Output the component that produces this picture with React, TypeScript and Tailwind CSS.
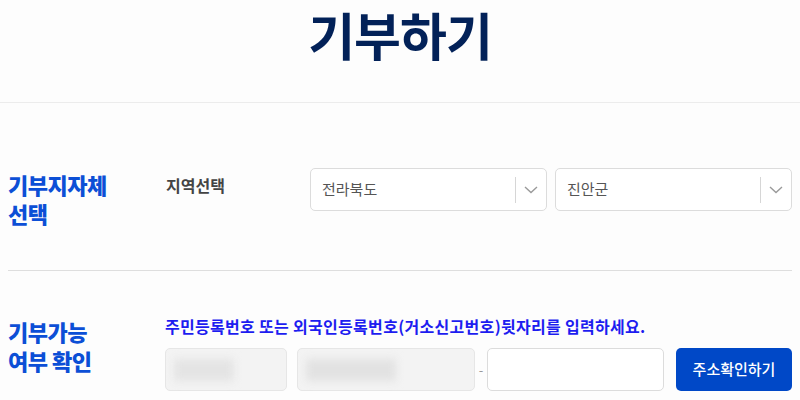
import React from "react";

function Chevron() {
  return (
    <svg width="14" height="8" viewBox="0 0 14 8" fill="none">
      <path d="M1 1l6 5.5L13 1" stroke="#9a9a9a" strokeWidth="1.4" />
    </svg>
  );
}

function Select({ value }: { value: string }) {
  return (
    <div className="flex-1 h-[43px] border border-[#dcdcdc] rounded-[5px] bg-white flex items-center">
      <div className="flex-1 pl-[11px] text-[15px] text-[#555]">{value}</div>
      <div className="w-px h-[26px] bg-[#d6d6d6]" />
      <div className="w-[30px] flex items-center justify-center">
        <Chevron />
      </div>
    </div>
  );
}

export default function App() {
  return (
    <div
      className="w-[800px] h-[400px] bg-[#fdfdfd] overflow-hidden"
      style={{ fontFamily: '"Noto Sans CJK KR", "Noto Sans", sans-serif' }}
    >
      <div className="h-[103px] border-b border-[#ececec] flex justify-center items-start">
        <h1 className="-mt-[3px] text-[51px] leading-[74px] font-bold text-[#022158] tracking-[-1px]">기부하기</h1>
      </div>

      <div className="mx-2 h-[168px] border-b border-[#dedede] flex pt-[65px]">
        <div className="w-[158px] text-[22px] leading-[29px] font-black text-[#0c4fd6] pt-[2px] tracking-[-0.5px]">
          기부지자체
          <br />
          선택
        </div>
        <div className="w-[144px] text-[16px] font-bold text-[#444] pt-[5px]">지역선택</div>
        <div className="flex-1 flex gap-[8px]">
          <Select value="전라북도" />
          <Select value="진안군" />
        </div>
      </div>

      <div className="mx-2 flex pt-[44px]">
        <div className="w-[158px] text-[22px] leading-[29px] font-black text-[#0c4fd6] pt-[2px] tracking-[-0.5px]">
          기부가능
          <br />
          여부 확인
        </div>
        <div className="flex-1">
          <div className="text-[16px] leading-[22px] font-bold text-[#1d1df0] tracking-[0.3px]">
            주민등록번호 또는 외국인등록번호(거소신고번호)뒷자리를 입력하세요.
          </div>
          <div className="flex items-center mt-[11px]">
            <div className="w-[122px] h-[43px] rounded-[5px] border border-[#e6e6e6] bg-[#f3f3f3] flex items-center pl-[8px]">
              <div className="w-[60px] h-[22px] bg-[#e4e4e4] blur-[4px]" />
            </div>
            <div className="w-[178px] h-[43px] ml-[10px] rounded-[5px] border border-[#e6e6e6] bg-[#f3f3f3] flex items-center pl-[8px]">
              <div className="w-[90px] h-[22px] bg-[#e2e2e2] blur-[4px]" />
            </div>
            <div className="w-[12px] text-center text-[#999] text-[13px]">-</div>
            <div className="w-[177px] h-[43px] rounded-[5px] border border-[#dcdcdc] bg-white" />
            <button className="ml-[12px] w-[116px] h-[43px] rounded-[5px] bg-[#0048c7] text-white text-[15px] font-medium">
              주소확인하기
            </button>
          </div>
        </div>
      </div>
    </div>
  );
}
